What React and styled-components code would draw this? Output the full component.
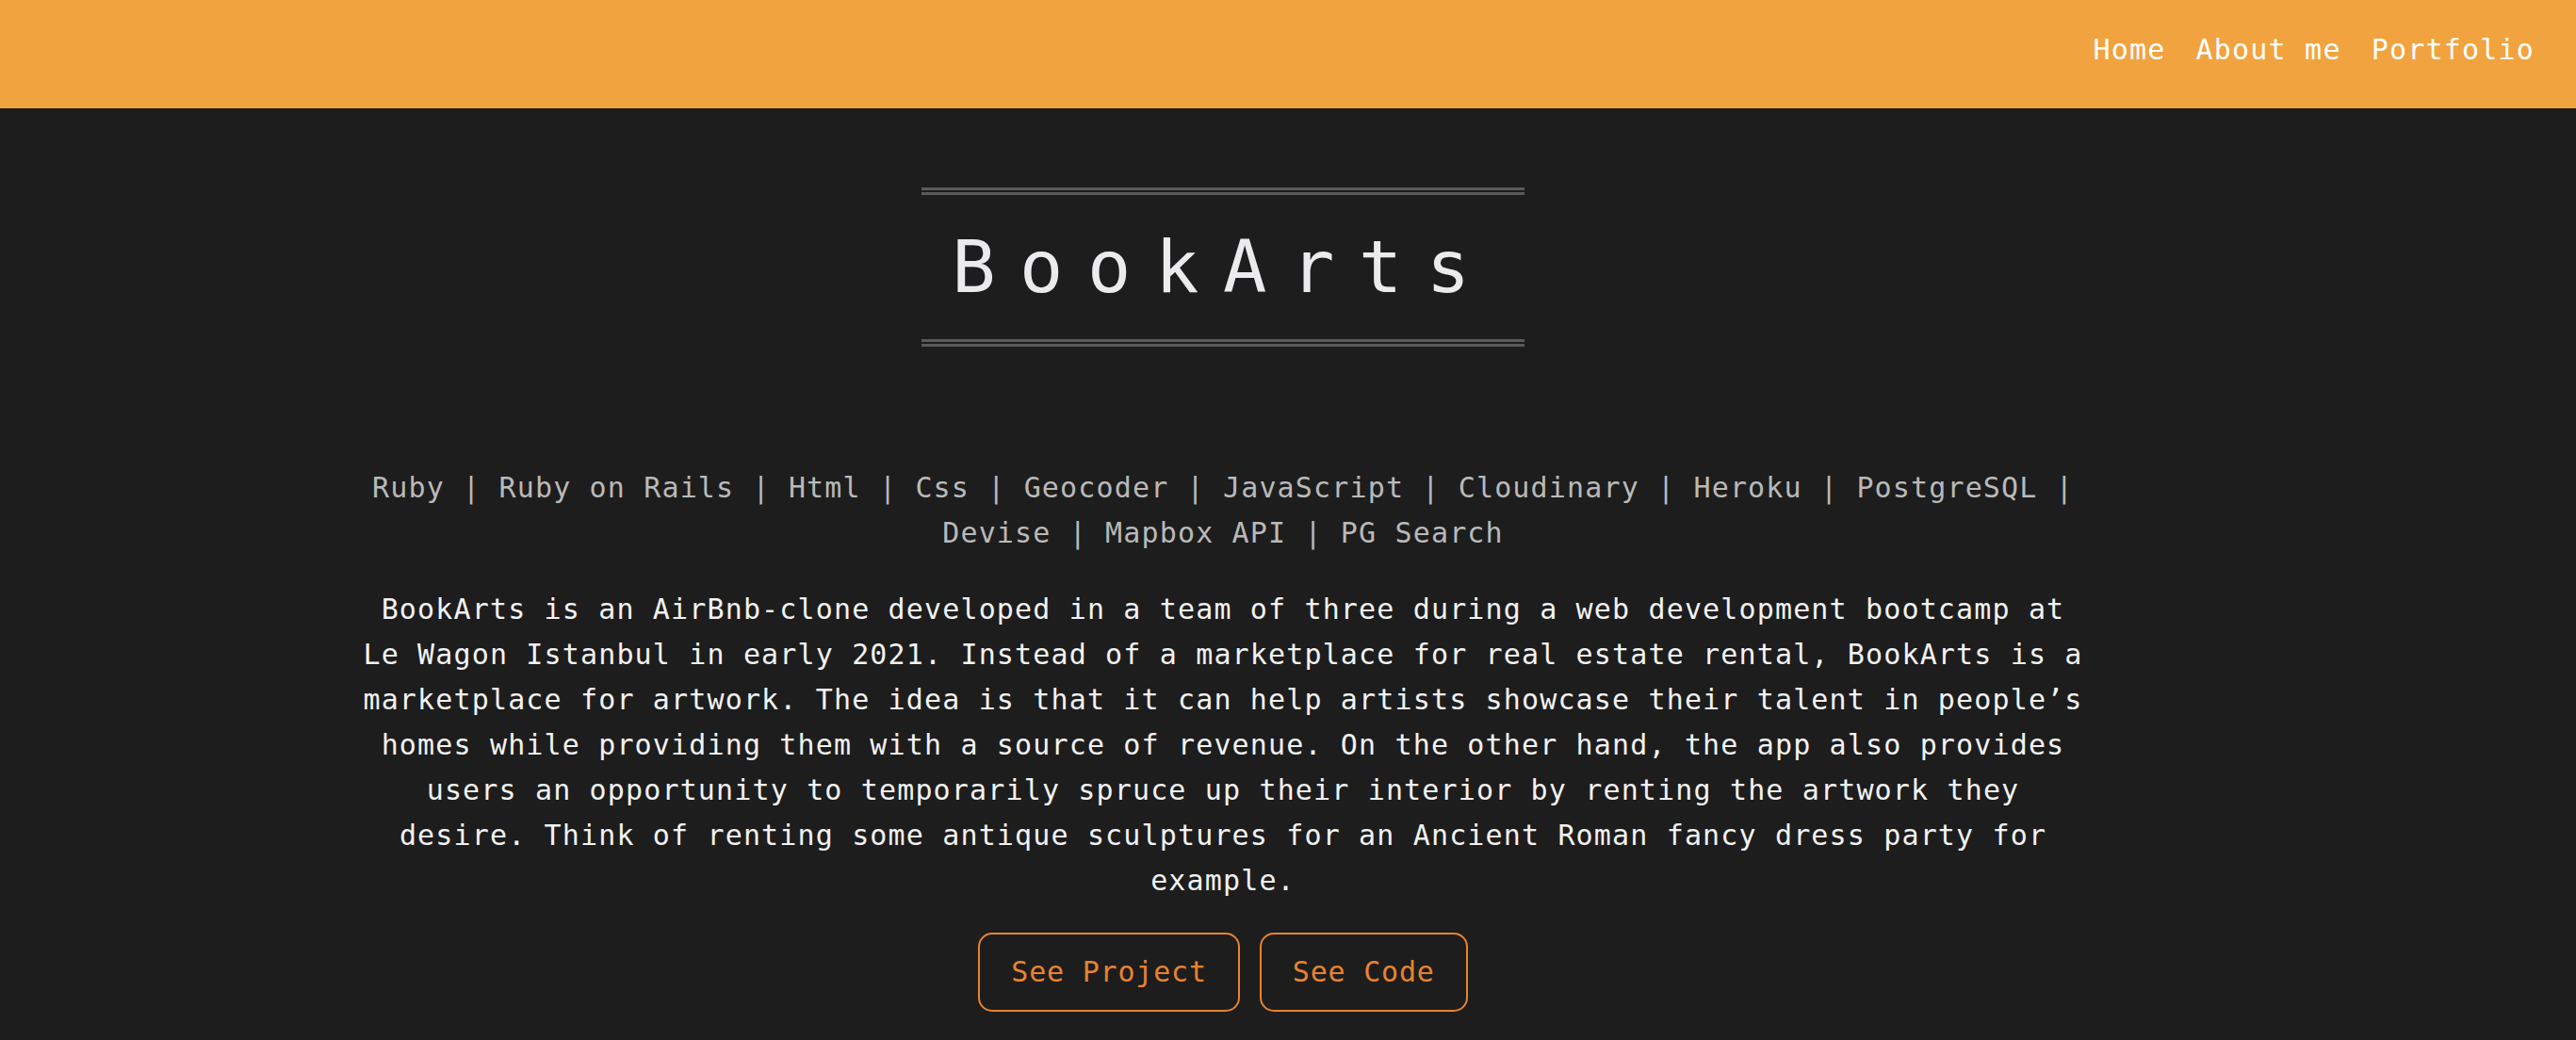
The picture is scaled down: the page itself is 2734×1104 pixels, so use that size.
import React from "react"
import styled, { createGlobalStyle } from "styled-components"

const GlobalStyle = createGlobalStyle`
  html, body {
    margin: 0;
    padding: 0;
    background-color: #1d1d1d;
    font-family: "DejaVu Sans Mono", "Liberation Mono", monospace;
  }
`

const techs = ["Ruby", "Ruby on Rails", "Html", "Css", "Geocoder", "JavaScript", "Cloudinary", "Heroku", "PostgreSQL", "Devise", "Mapbox API", "PG Search"]

const App = () => {
  return (
    <>
      <GlobalStyle />
      <Header>
        <Nav>
          <NavLink href="#">Home</NavLink>
          <NavLink href="#">About me</NavLink>
          <NavLink href="#">Portfolio</NavLink>
        </Nav>
      </Header>
      <Main>
        <Title>BookArts</Title>
        <Techs>{techs.join(" | ")}</Techs>
        <Description>
          BookArts is an AirBnb-clone developed in a team of three during a web development bootcamp at
          Le Wagon Istanbul in early 2021. Instead of a marketplace for real estate rental, BookArts is a
          marketplace for artwork. The idea is that it can help artists showcase their talent in people’s
          homes while providing them with a source of revenue. On the other hand, the app also provides
          users an opportunity to temporarily spruce up their interior by renting the artwork they
          desire. Think of renting some antique sculptures for an Ancient Roman fancy dress party for
          example.
        </Description>
        <Buttons>
          <Button href="#">See Project</Button>
          <Button href="#">See Code</Button>
        </Buttons>
      </Main>
    </>
  )
}

const Header = styled.header`
    height: 115px;
    box-sizing: border-box;
    padding: 35px 44px 0 0;
    background-color: #f1a33f;
    display: flex;
    justify-content: flex-end;
    align-items: flex-start;
  `

const Nav = styled.nav`
    display: flex;
    gap: 32px;
  `

const NavLink = styled.a`
    color: #ffffff;
    text-decoration: none;
    font-size: 30px;
    letter-spacing: 1.2px;
    line-height: 35px;
  `

const Main = styled.main`
    display: flex;
    flex-direction: column;
    align-items: center;
    padding: 84px 138px 0 0;
  `

const Title = styled.h1`
    margin: 0;
    padding: 32px 32px;
    border-top: 8px double #5a5a5a;
    border-bottom: 8px double #5a5a5a;
    font-size: 77px;
    font-weight: normal;
    letter-spacing: 25.6px;
    line-height: normal;
    color: #ebebed;
  `

const Techs = styled.p`
    margin: 126px 0 0 0;
    max-width: 1840px;
    text-align: center;
    font-size: 30px;
    letter-spacing: 1.15px;
    line-height: 48px;
    color: #b9b9b9;
  `

const Description = styled.p`
    margin: 33px 0 0 0;
    max-width: 1840px;
    text-align: center;
    font-size: 30px;
    letter-spacing: 1.15px;
    line-height: 48px;
    color: #f2f2f2;
  `

const Buttons = styled.div`
    display: flex;
    gap: 21px;
    margin-top: 31px;
  `

const Button = styled.a`
    padding: 16px 33px;
    border: 2px solid #e8832f;
    border-radius: 15px;
    color: #e8832f;
    text-decoration: none;
    font-size: 30px;
    letter-spacing: 0.8px;
    line-height: 48px;
  `

export default App
